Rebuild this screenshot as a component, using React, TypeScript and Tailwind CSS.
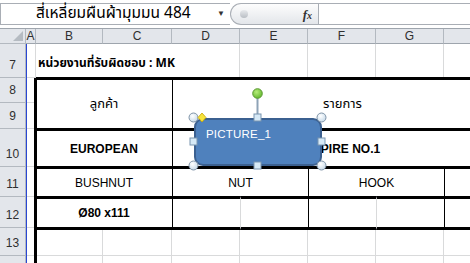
const HDR = 'bg-[#e3e6eb] border-[#b3b9c0] text-[12px] text-[#2f2f2f]';
const GRID = 'bg-white border-r border-b border-[#d9dadb]';
const THAI = "font-['Noto_Sans_Thai','Liberation_Sans','DejaVu_Sans',sans-serif]";

const COLS = ['col-start-1', 'col-start-2', 'col-start-3', 'col-start-4', 'col-start-5', 'col-start-6', 'col-start-7', 'col-start-8', 'col-start-9'];
const ROWS = ['row-start-1', 'row-start-2', 'row-start-3', 'row-start-4', 'row-start-5', 'row-start-6', 'row-start-7', 'row-start-8', 'row-start-9'];
// column H runs past the window edge, its letter is never on screen
const LETTERS = ['A', 'B', 'C', 'D', 'E', 'F', 'G', ''];
// row 14 is only a few pixels tall on screen, its number sits below the fold
const ROW_NUMS = ['7', '8', '9', '10', '11', '12', '13', ''];

function FormulaBar() {
  return (
    <div className="h-[28px] bg-white pt-[3px]">
      <div className="flex h-[22px]">
        <div className="flex w-[230px] items-center border border-r-0 border-[#a9aeb5] bg-white">
          <span className={`${THAI} pl-[35px] text-[15.5px] leading-none text-black`}>สี่เหลี่ยมผืนผ้ามุมมน 484</span>
          <span className="ml-auto mr-[5px] text-[8px] text-[#333]">▼</span>
        </div>
        <div className="flex w-[88px] items-center rounded-l-full border border-r-0 border-[#a9aeb5] bg-linear-to-b from-[#fdfdfd] to-[#e3e6ea]">
          <span className="ml-[9px] size-[8px] rounded-full bg-linear-to-b from-[#e8eaed] to-[#b9bec4]" />
          <span className="ml-auto mr-[6px] font-['Liberation_Serif',serif] text-[13px] font-bold italic leading-none text-[#333]">
            f<span className="text-[10px]">x</span>
          </span>
        </div>
        <div className="flex-1 border border-r-0 border-[#a9aeb5] bg-white" />
      </div>
    </div>
  );
}

function Handles() {
  const circle = { fill: 'url(#hc)', stroke: '#7f93a7', strokeWidth: 1 };
  const square = { fill: '#d6e9f6', stroke: '#7a95b0', strokeWidth: 1 };
  return (
    <svg className="absolute left-[180px] top-[52px]" width="155" height="96" viewBox="0 0 155 96">
      <defs>
        <radialGradient id="hc" cx="40%" cy="35%" r="70%">
          <stop offset="0" stopColor="#ffffff" />
          <stop offset="1" stopColor="#c4d8e8" />
        </radialGradient>
        <radialGradient id="hg" cx="40%" cy="35%" r="70%">
          <stop offset="0" stopColor="#b6ec7a" />
          <stop offset="1" stopColor="#5fb52a" />
        </radialGradient>
      </defs>
      <line x1="77.5" y1="16" x2="77.5" y2="36" stroke="#8ea3b7" strokeWidth="2" />
      <circle cx="77.5" cy="12.5" r="4.8" fill="url(#hg)" stroke="#5c9a34" />
      <circle cx="13.5" cy="36.5" r="4.5" {...circle} />
      <circle cx="141.5" cy="36.5" r="4.5" {...circle} />
      <circle cx="13.5" cy="84.5" r="4.5" {...circle} />
      <circle cx="141.5" cy="84.5" r="4.5" {...circle} />
      <rect x="74" y="33" width="7" height="7" {...square} />
      <rect x="10" y="57" width="7" height="7" {...square} />
      <rect x="138" y="57" width="7" height="7" {...square} />
      <rect x="74" y="81" width="7" height="7" {...square} />
      <path d="M22 32 L26 36.5 L22 41 L18 36.5 Z" fill="#f7e43c" stroke="#c6a200" strokeWidth="0.8" />
    </svg>
  );
}

function Shape() {
  return (
    <>
      <div className="absolute left-[194px] top-[89px] flex h-[48px] w-[128px] items-start rounded-[9px] border-2 border-[#3b6090] bg-[#4f81bd] pl-[10px] pt-[9px]">
        <span className="font-['Liberation_Sans',sans-serif] text-[11.5px] leading-none tracking-[0.2px] text-white">PICTURE_1</span>
      </div>
      <Handles />
    </>
  );
}

function Sheet() {
  const bg: React.ReactNode[] = [];
  for (let r = 1; r < 9; r++) {
    for (let c = 1; c < 9; c++) {
      if (r === 1 && (c === 2 || c === 3 || c === 4)) continue;
      bg.push(<div key={`${r}-${c}`} className={`${GRID} ${COLS[c]} ${ROWS[r]}`} />);
    }
  }

  const cell = 'flex items-center justify-center bg-white border-black';
  const top = 'border-t-[3px] -mt-[1px]';
  const last = 'border-b-[3px] -mb-[2px]';

  return (
    <div className="relative border-t border-[#9ea5ad]">
      <div className="grid w-[512px] grid-cols-[26px_10px_67px_69px_68px_68px_68px_68px_68px] grid-rows-[15px_34px_25px_26px_38px_30px_31px_28px_28px]">
        {/* corner */}
        <div className={`${HDR} col-start-1 row-start-1 flex items-end justify-end border-r border-b pb-[2px] pr-[2px]`}>
          <svg width="10" height="10" viewBox="0 0 10 10">
            <path d="M10 0 L10 10 L0 10 Z" fill="#b5bbc2" />
          </svg>
        </div>
        {LETTERS.map((l, i) => (
          <div key={i} className={`${HDR} ${COLS[i + 1]} row-start-1 flex items-center justify-center border-r border-b border-b-[#9ea5ad] font-['Liberation_Sans',sans-serif]`}>
            {l}
          </div>
        ))}
        {ROW_NUMS.map((n, i) => (
          <div key={i} className={`${HDR} col-start-1 ${ROWS[i + 1]} flex items-end justify-center border-r border-b pb-[3px] font-['Liberation_Sans',sans-serif]`}>
            {n}
          </div>
        ))}

        {bg}

        {/* row 7 */}
        <div className={`col-start-3 col-span-3 row-start-2 flex items-end border-r border-b border-[#d9dadb] bg-white pb-[8px] pl-[2px] ${THAI} text-[12px] font-bold leading-none`}>
          หน่วยงานที่รับผิดชอบ : MK
        </div>

        {/* rows 8-9 */}
        <div className={`${cell} ${top} col-start-3 col-span-2 row-start-3 row-span-2 ${THAI} text-[13px]`}>ลูกค้า</div>
        <div className={`${cell} ${top} col-start-5 col-span-5 row-start-3 row-span-2 border-l ${THAI} text-[13px]`}>รายการ</div>

        {/* row 10 */}
        <div className={`${cell} ${top} col-start-3 col-span-2 row-start-5 text-[12px] font-bold`}>EUROPEAN</div>
        <div className={`${cell} ${top} col-start-5 col-span-5 row-start-5 border-l pr-[2px] text-[12px] font-bold`}>EMPIRE NO.1</div>

        {/* row 11 */}
        <div className={`${cell} ${top} col-start-3 col-span-2 row-start-6 text-[12px]`}>BUSHNUT</div>
        <div className={`${cell} ${top} col-start-5 col-span-2 row-start-6 border-l text-[12px]`}>NUT</div>
        <div className={`${cell} ${top} col-start-7 col-span-2 row-start-6 border-l text-[12px]`}>HOOK</div>
        <div className={`${cell} ${top} col-start-9 row-start-6 border-l`} />

        {/* row 12 */}
        <div className={`${cell} ${top} ${last} col-start-3 col-span-2 row-start-7 text-[12px] font-bold`}>Ø80 x111</div>
        <div className={`${cell} ${top} ${last} col-start-5 row-start-7 border-l`} />
        <div className={`${cell} ${top} ${last} col-start-6 row-start-7 border-l border-l-[#d9dadb]`} />
        <div className={`${cell} ${top} ${last} col-start-7 row-start-7 border-l`} />
        <div className={`${cell} ${top} ${last} col-start-8 row-start-7 border-l border-l-[#d9dadb]`} />
        <div className={`${cell} ${top} ${last} col-start-9 row-start-7 border-l`} />

        {/* table left edge and frozen column line */}
        <div className="col-start-3 row-start-3 row-span-7 -ml-[2px] border-l-[3px] border-black" />
        <div className="col-start-2 row-start-2 row-span-8 border-l border-[#2a47d4]" />
      </div>
      <Shape />
    </div>
  );
}

export default function App() {
  return (
    <div className="h-[263px] w-[470px] overflow-hidden bg-white font-['Liberation_Sans',sans-serif] text-black">
      <FormulaBar />
      <Sheet />
    </div>
  );
}
